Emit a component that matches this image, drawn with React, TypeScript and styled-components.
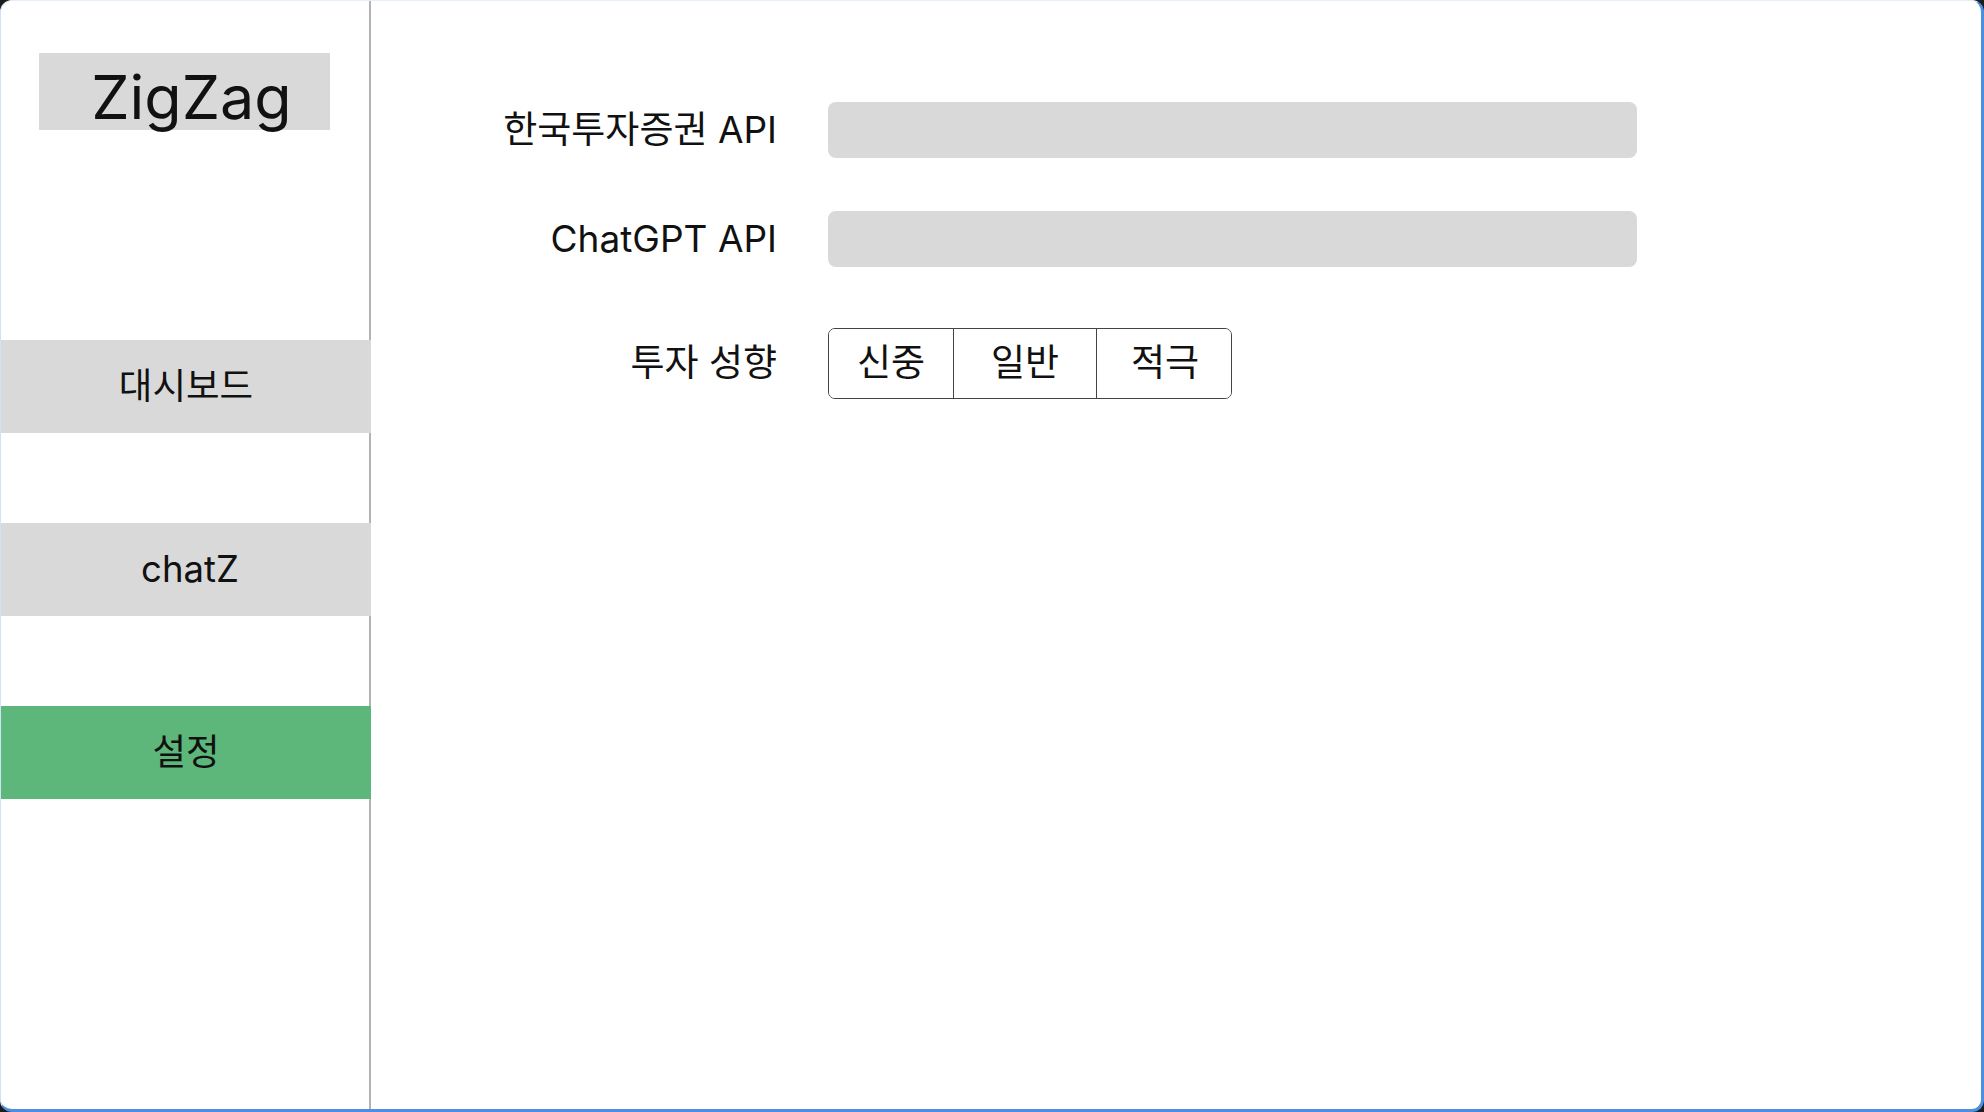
import React, { useState } from "react";
import styled, { createGlobalStyle } from "styled-components";

const Global = createGlobalStyle`
  html, body { margin: 0; padding: 0; background: #1c1c1c; }
  body { font-family: "Inter", "Noto Sans CJK KR", sans-serif; color: #111; }
  * { box-sizing: border-box; }
`;

const Frame = styled.div`
  width: 1984px;
  height: 1112px;
  display: flex;
  background: #fff;
  border-radius: 12px;
  border-left: 1px solid #cfe2f7;
  border-right: 3px solid #4a90e2;
  border-bottom: 3px solid #4a90e2;
  border-top: 1px solid #e6f0fb;
  overflow: hidden;
`;

const Sidebar = styled.aside`
  width: 370px;
  flex-shrink: 0;
  border-right: 2px solid #b3b3b3;
  display: flex;
  flex-direction: column;
  padding-top: 52px;
`;

const Logo = styled.div`
  margin-left: 38px;
  width: 291px;
  height: 77px;
  background: #d9d9d9;
  font-size: 61px;
  line-height: 88px;
  text-align: center;
  padding-left: 14px;
  color: #111;
  white-space: nowrap;
`;

const Nav = styled.nav`
  display: flex;
  flex-direction: column;
  gap: 90px;
  margin-top: 210px;
`;

const NavItem = styled.div<{ $active?: boolean; $shift?: number }>`
  height: 93px;
  margin-right: -2px;
  position: relative;
  background: ${(p) => (p.$active ? "#5db77a" : "#d9d9d9")};
  display: flex;
  align-items: center;
  justify-content: center;
  padding-left: ${(p) => p.$shift ?? 0}px;
  font-size: 36.5px;
  line-height: 1.1;
  color: #111;
`;

const Main = styled.main`
  flex: 1;
  padding-top: 101px;
`;

const Form = styled.div`
  display: grid;
  grid-template-columns: 406px 809px;
  column-gap: 51px;
  align-items: center;
`;

const Label = styled.label<{ $top?: number }>`
  justify-self: end;
  font-size: 37px;
  line-height: 1.1;
  color: #111;
  white-space: nowrap;
  margin-top: ${(p) => p.$top ?? 0}px;
`;

const Field = styled.div<{ $top?: number }>`
  height: 56px;
  background: #d9d9d9;
  border-radius: 8px;
  margin-top: ${(p) => p.$top ?? 0}px;
`;

const Segmented = styled.div<{ $top?: number }>`
  display: flex;
  width: 404px;
  height: 71px;
  border: 1.5px solid #444;
  border-radius: 7px;
  overflow: hidden;
  margin-top: ${(p) => p.$top ?? 0}px;
`;

const Segment = styled.button<{ $w: number }>`
  width: ${(p) => p.$w}px;
  flex-shrink: 0;
  background: #fff;
  border: none;
  border-left: 1.5px solid #444;
  font-family: inherit;
  font-size: 37px;
  line-height: 1.1;
  color: #111;
  padding: 0;
  cursor: pointer;
  &:first-child { border-left: none; }
`;

const segments = [
  { label: "신중", w: 124 },
  { label: "일반", w: 143 },
  { label: "적극", w: 137 },
];

export default function App() {
  const [risk, setRisk] = useState("일반");
  return (
    <>
      <Global />
      <Frame>
        <Sidebar>
          <Logo>ZigZag</Logo>
          <Nav>
            <NavItem>대시보드</NavItem>
            <NavItem $shift={8}>chatZ</NavItem>
            <NavItem $active>설정</NavItem>
          </Nav>
        </Sidebar>
        <Main>
          <Form>
            <Label>한국투자증권 API</Label>
            <Field />
            <Label $top={53}>ChatGPT API</Label>
            <Field $top={53} />
            <Label $top={61}>투자 성향</Label>
            <Segmented $top={61}>
              {segments.map((s) => (
                <Segment key={s.label} $w={s.w} onClick={() => setRisk(s.label)} aria-pressed={risk === s.label}>
                  {s.label}
                </Segment>
              ))}
            </Segmented>
          </Form>
        </Main>
      </Frame>
    </>
  );
}
